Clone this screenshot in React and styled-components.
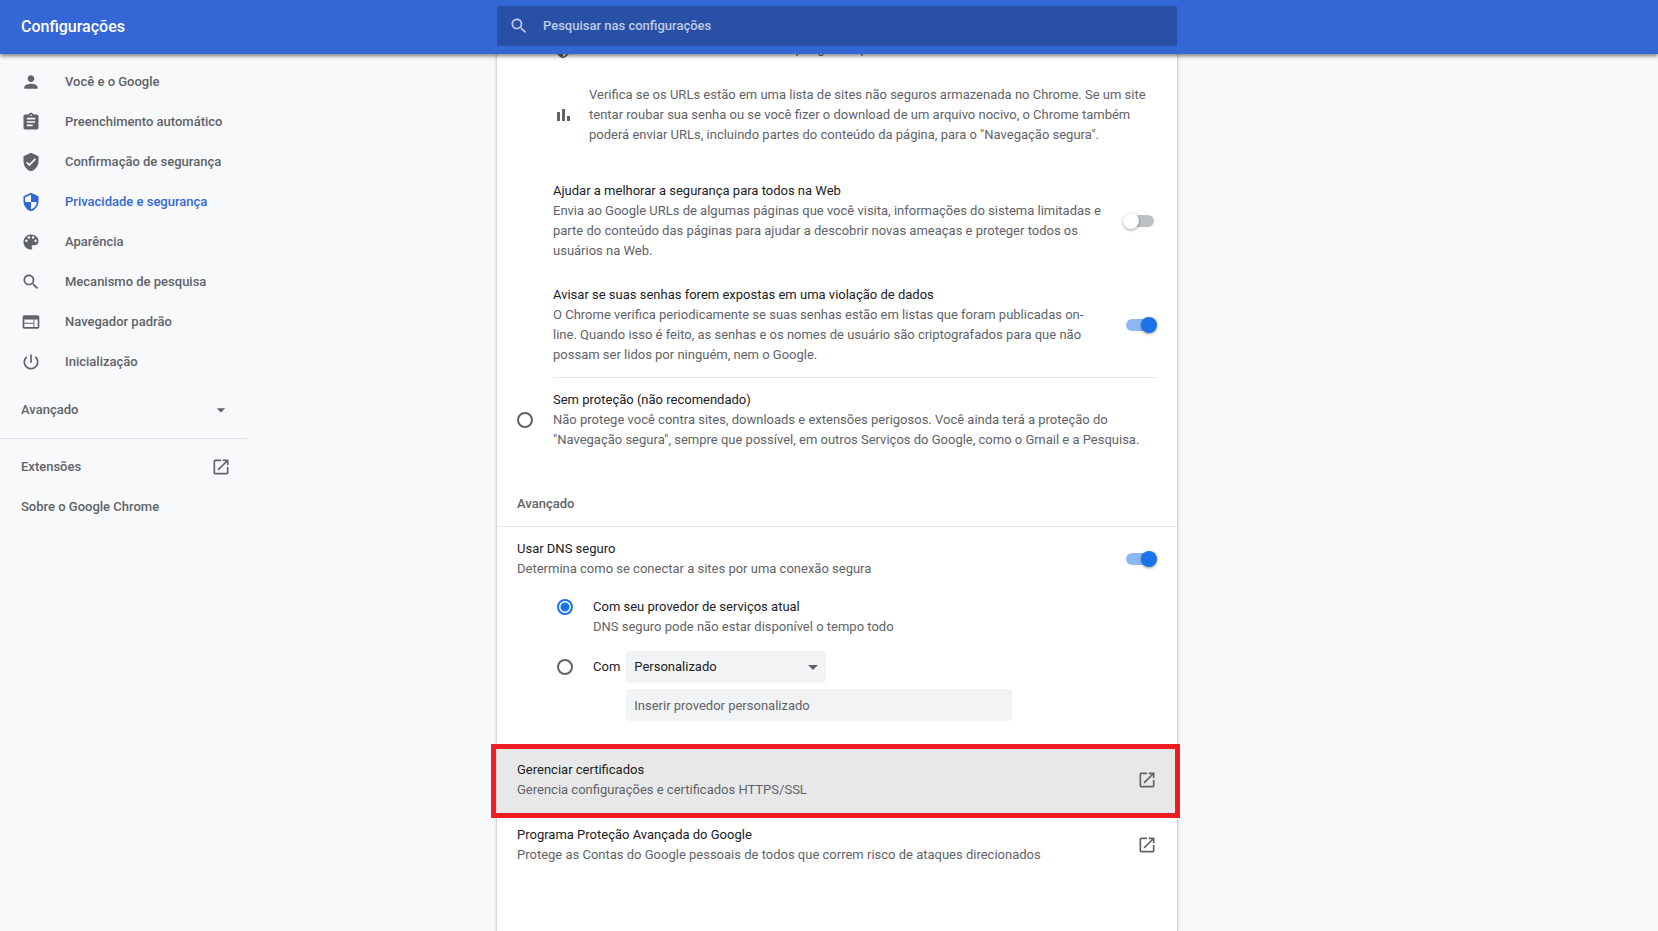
import React, { useId, useState } from 'react';
import styled, { createGlobalStyle, css } from 'styled-components';

const GlobalStyle = createGlobalStyle`
  * {
    box-sizing: border-box;
  }

  body {
    margin: 0;
    background: #f8f9fb;
    color: #202124;
    font-family: Roboto, 'Liberation Sans', sans-serif;
    font-size: 13px;
    line-height: 20px;
  }

  input,
  select,
  button {
    font: inherit;
  }
`;

const icons = {
  person:
    'M12 12c2.21 0 4-1.79 4-4s-1.79-4-4-4-4 1.79-4 4 1.79 4 4 4zm0 2c-2.67 0-8 1.34-8 4v2h16v-2c0-2.66-5.33-4-8-4z',
  assignment:
    'M19 3h-4.18C14.4 1.84 13.3 1 12 1c-1.3 0-2.4.84-2.82 2H5c-1.1 0-2 .9-2 2v14c0 1.1.9 2 2 2h14c1.1 0 2-.9 2-2V5c0-1.1-.9-2-2-2zm-7 0c.55 0 1 .45 1 1s-.45 1-1 1-1-.45-1-1 .45-1 1-1zm2 14H7v-2h7v2zm3-4H7v-2h10v2zm0-4H7V7h10v2z',
  verified:
    'M12 1L3 5v6c0 5.55 3.84 10.74 9 12 5.16-1.26 9-6.45 9-12V5l-9-4zm-2 16l-4-4 1.41-1.41L10 14.17l6.59-6.59L18 9l-8 8z',
  security:
    'M12 1L3 5v6c0 5.55 3.84 10.74 9 12 5.16-1.26 9-6.45 9-12V5l-9-4zm0 10.99h7c-.53 4.12-3.28 7.79-7 8.94V12H5V6.3l7-3.11v8.8z',
  palette:
    'M12 3c-4.97 0-9 4.03-9 9s4.03 9 9 9c.83 0 1.5-.67 1.5-1.5 0-.39-.15-.74-.39-1.01-.23-.26-.38-.61-.38-.99 0-.83.67-1.5 1.5-1.5H16c2.76 0 5-2.24 5-5 0-4.42-4.03-8-9-8zm-5.5 9c-.83 0-1.5-.67-1.5-1.5S5.67 9 6.5 9 8 9.67 8 10.5 7.33 12 6.5 12zm3-4C8.67 8 8 7.33 8 6.5S8.67 5 9.5 5s1.5.67 1.5 1.5S10.33 8 9.5 8zm5 0c-.83 0-1.5-.67-1.5-1.5S13.67 5 14.5 5s1.5.67 1.5 1.5S15.33 8 14.5 8zm3 4c-.83 0-1.5-.67-1.5-1.5S16.67 9 17.5 9s1.5.67 1.5 1.5-.67 1.5-1.5 1.5z',
  search:
    'M15.5 14h-.79l-.28-.27C15.41 12.59 16 11.11 16 9.5 16 5.91 13.09 3 9.5 3S3 5.91 3 9.5 5.91 16 9.5 16c1.61 0 3.09-.59 4.23-1.57l.27.28v.79l5 4.99L20.49 19l-4.99-5zm-6 0C7.01 14 5 11.99 5 9.5S7.01 5 9.5 5 14 7.01 14 9.5 11.99 14 9.5 14z',
  web: 'M20 4H4c-1.1 0-1.99.9-1.99 2L2 18c0 1.1.9 2 2 2h16c1.1 0 2-.9 2-2V6c0-1.1-.9-2-2-2zm-5 14H4v-4h11v4zm0-5H4V9h11v4zm5 5h-4V9h4v9z',
  power:
    'M13 3h-2v10h2V3zm4.83 2.17l-1.42 1.42C17.99 7.86 19 9.81 19 12c0 3.87-3.13 7-7 7s-7-3.13-7-7c0-2.19 1.01-4.14 2.58-5.42L6.17 5.17C4.23 6.82 3 9.26 3 12c0 4.97 4.03 9 9 9s9-4.03 9-9c0-2.74-1.23-5.18-3.17-6.83z',
  arrow: 'M7 10l5 5 5-5z',
  launch:
    'M19 19H5V5h7V3H5c-1.11 0-2 .9-2 2v14c0 1.1.89 2 2 2h14c1.1 0 2-.9 2-2v-7h-2v7zM14 3v2h3.59l-9.83 9.83 1.41 1.41L19 6.41V10h2V3h-7z',
  chart: 'M4.8 8.4h3.6v10.8H4.8zm6-3.6h3.6v14.4h-3.6zm6 8.4h3.6v6h-3.6z',
};

const StyledIcon = styled.svg`
  display: block;
  flex: none;
  width: 20px;
  height: 20px;
  fill: currentColor;
`;

const Icon = ({ name }) => (
  <StyledIcon viewBox="0 0 24 24" aria-hidden="true">
    <path d={icons[name]} />
  </StyledIcon>
);

const columns = css`
  display: grid;
  grid-template-columns: 1fr minmax(0, 680px) 1fr;
  padding-left: 16px;
`;

const Page = styled.div`
  height: 100vh;
  overflow: hidden;
  display: flex;
  flex-direction: column;
`;

const Toolbar = styled.header`
  ${columns}
  position: relative;
  z-index: 1;
  flex: none;
  align-items: center;
  padding-top: 6px;
  padding-bottom: 8px;
  background: #3367d6;
  color: #fff;
  box-shadow: 0 2px 4px rgba(0, 0, 0, 0.5);
`;

const Title = styled.h1`
  margin: 0;
  padding: 2px 0 0 5px;
  font-size: 16px;
  font-weight: 500;
`;

const SearchBox = styled.label`
  display: flex;
  align-items: center;
  gap: 14px;
  height: 40px;
  padding: 0 12px;
  border-radius: 2px;
  background: #2850a7;
  color: #bfcbe5;
`;

const SearchInput = styled.input`
  flex: 1;
  min-width: 0;
  padding: 0;
  border: 0;
  outline: 0;
  background: transparent;
  color: #fff;
  font-weight: 500;

  &::placeholder {
    color: #bfcbe5;
    opacity: 1;
  }
`;

const Content = styled.div`
  ${columns}
  flex: 1;
  min-height: 0;
`;

const Sidebar = styled.nav`
  width: 247px;
  margin-left: -16px;
  padding-top: 8px;
  color: #5f6368;
  font-weight: 500;
`;

const navRow = css`
  display: flex;
  align-items: center;
  width: 100%;
  height: 40px;
  padding: 0 16px 0 21px;
  color: inherit;
`;

const NavLink = styled.a`
  ${navRow}
  gap: 24px;
  justify-content: ${props => (props.$spread ? 'space-between' : 'flex-start')};
  color: ${props => (props.$active ? '#3367d6' : 'inherit')};
  text-decoration: none;
`;

const AdvancedButton = styled.button`
  ${navRow}
  justify-content: space-between;
  margin: 8px 0;
  border: 0;
  background: none;
  font-weight: 500;
  cursor: pointer;
`;

const NavDivider = styled.hr`
  margin: 0 0 8px;
  border: 0;
  border-top: 1px solid #e0e2e5;
`;

// the card is scrolled, its first line sits half under the toolbar
const Card = styled.main`
  min-height: 100%;
  margin-top: -15px;
  background: #fff;
  box-shadow: 0 1px 2px rgba(60, 64, 67, 0.3), 0 1px 3px 1px rgba(60, 64, 67, 0.15);
`;

const Bullets = styled.ul`
  display: grid;
  gap: 26px;
  margin: 0;
  padding: 0 20px 36px 56px;
  list-style: none;
  color: #5f6368;
`;

const Bullet = styled.li`
  display: flex;
  align-items: center;
  gap: 16px;
`;

const SubOptions = styled.div`
  display: grid;
  gap: 24px;
  margin: 0 20px 0 56px;
  padding-bottom: 12px;
  border-bottom: 1px solid #e8eaed;
`;

const Setting = styled.div`
  display: flex;
  align-items: center;
  justify-content: space-between;
  gap: 20px;
`;

const SettingLabel = styled.label`
  display: block;
  min-width: 0;
`;

const Secondary = styled.span`
  display: block;
  color: #5f6368;
`;

const ToggleInput = styled.input`
  appearance: none;
  position: relative;
  flex: none;
  width: 34px;
  height: 16px;
  margin: 0;
  cursor: pointer;

  &::before {
    content: '';
    position: absolute;
    inset: 2px 3px;
    border-radius: 6px;
    background: #bdc1c6;
  }

  &::after {
    content: '';
    position: absolute;
    top: 0;
    left: 0;
    width: 16px;
    height: 16px;
    border-radius: 50%;
    background: #fff;
    box-shadow: 0 1px 3px rgba(0, 0, 0, 0.4);
  }

  &:checked::before {
    background: #8cb9f4;
  }

  &:checked::after {
    left: 18px;
    background: #1a73e8;
  }
`;

const RadioInput = styled.input`
  appearance: none;
  flex: none;
  width: 16px;
  height: 16px;
  margin: 0;
  border: 2px solid #5f6368;
  border-radius: 50%;
  cursor: pointer;

  &:checked {
    border-color: #1a73e8;
    background: radial-gradient(circle, #1a73e8 4px, transparent 5px);
  }
`;

const RadioRow = styled.div`
  display: flex;
  align-items: ${props => (props.$inset ? 'flex-start' : 'center')};
  gap: 20px;

  ${RadioInput} {
    margin-top: ${props => props.$inset || '0'};
  }
`;

const NoProtection = styled.div`
  padding: 12px 20px 44px;
`;

const SectionTitle = styled.h2`
  margin: 0;
  padding: 0 20px 12px;
  border-bottom: 1px solid #e8eaed;
  color: #5f6368;
  font-size: 13px;
  font-weight: 500;
`;

const DnsSection = styled.section`
  padding: 12px 20px 27px;
`;

const DnsOptions = styled.div`
  display: grid;
  gap: 14px;
  padding: 18px 0 0 40px;
`;

const Provider = styled.div`
  display: grid;
  grid-template-columns: max-content minmax(0, 386px);
  align-items: center;
  gap: 6px;
  flex: 1;
`;

const SelectWrap = styled.div`
  position: relative;
  width: 200px;
`;

const field = css`
  width: 100%;
  height: 32px;
  padding: 0 8px;
  border: 0;
  border-radius: 4px;
  background: #f1f3f4;
`;

const Select = styled.select`
  ${field}
  display: block;
  appearance: none;
  color: #202124;
`;

const SelectArrow = styled.svg`
  position: absolute;
  top: 14px;
  right: 8px;
  width: 10px;
  height: 5px;
  fill: #5f6368;
  pointer-events: none;
`;

const ProviderInput = styled.input`
  ${field}
  grid-column: 2;

  &::placeholder {
    color: #5f6368;
    opacity: 1;
  }
`;

const LinkRow = styled.a`
  display: flex;
  position: relative;
  align-items: center;
  justify-content: space-between;
  gap: 20px;
  padding: 12px 20px 13px;
  background: ${props => (props.$marked ? '#e8e8e8' : 'transparent')};
  color: #202124;
  text-decoration: none;

  ${StyledIcon} {
    color: #5f6368;
  }

  ${props =>
    props.$marked &&
    css`
      &::after {
        content: '';
        position: absolute;
        inset: -4px -3px -5px -6px;
        border: 5px solid #ee1c24;
      }
    `}
`;

const navItems = [
  { icon: 'person', text: 'Você e o Google' },
  { icon: 'assignment', text: 'Preenchimento automático' },
  { icon: 'verified', text: 'Confirmação de segurança' },
  { icon: 'security', text: 'Privacidade e segurança', active: true },
  { icon: 'palette', text: 'Aparência' },
  { icon: 'search', text: 'Mecanismo de pesquisa' },
  { icon: 'web', text: 'Navegador padrão' },
  { icon: 'power', text: 'Inicialização' },
];

const ToggleRow = ({ title, text, defaultChecked }) => {
  const id = useId();
  return (
    <Setting>
      <SettingLabel htmlFor={id}>
        {title}
        <Secondary>{text}</Secondary>
      </SettingLabel>
      <ToggleInput type="checkbox" role="switch" id={id} defaultChecked={defaultChecked} />
    </Setting>
  );
};

const ExternalRow = ({ title, text, marked }) => (
  <LinkRow href="#" $marked={marked}>
    <span>
      {title}
      <Secondary>{text}</Secondary>
    </span>
    <Icon name="launch" />
  </LinkRow>
);

const DnsProvider = () => {
  const [mode, setMode] = useState('current');
  return (
    <DnsOptions>
      <RadioRow $inset="2px">
        <RadioInput
          type="radio"
          name="dns"
          id="dns-current"
          checked={mode === 'current'}
          onChange={() => setMode('current')}
        />
        <SettingLabel htmlFor="dns-current">
          Com seu provedor de serviços atual
          <Secondary>DNS seguro pode não estar disponível o tempo todo</Secondary>
        </SettingLabel>
      </RadioRow>
      <RadioRow $inset="8px">
        <RadioInput
          type="radio"
          name="dns"
          id="dns-custom"
          checked={mode === 'custom'}
          onChange={() => setMode('custom')}
        />
        <Provider>
          <SettingLabel htmlFor="dns-custom">Com</SettingLabel>
          <SelectWrap>
            <Select aria-label="Provedor de DNS">
              <option>Personalizado</option>
            </Select>
            <SelectArrow viewBox="0 0 10 5" aria-hidden="true">
              <path d="M0 0l5 5 5-5z" />
            </SelectArrow>
          </SelectWrap>
          <ProviderInput
            type="text"
            aria-label="Inserir provedor personalizado"
            placeholder="Inserir provedor personalizado"
          />
        </Provider>
      </RadioRow>
    </DnsOptions>
  );
};

const App = () => {
  return (
    <>
      <GlobalStyle />
      <Page>
        <Toolbar>
          <Title>Configurações</Title>
          <SearchBox>
            <Icon name="search" />
            <SearchInput
              type="search"
              aria-label="Pesquisar nas configurações"
              placeholder="Pesquisar nas configurações"
            />
          </SearchBox>
        </Toolbar>
        <Content>
          <Sidebar>
            {navItems.map(item => (
              <NavLink key={item.icon} href="#" $active={item.active}>
                <Icon name={item.icon} />
                {item.text}
              </NavLink>
            ))}
            <AdvancedButton type="button">
              Avançado
              <Icon name="arrow" />
            </AdvancedButton>
            <NavDivider />
            <NavLink href="#" $spread>
              Extensões
              <Icon name="launch" />
            </NavLink>
            <NavLink href="#">Sobre o Google Chrome</NavLink>
          </Sidebar>
          <Card>
            <Bullets>
              <Bullet>
                <Icon name="security" />
                Detecta e avisa você sobre eventos perigosos quando eles acontecem
              </Bullet>
              <Bullet>
                <Icon name="chart" />
                Verifica se os URLs estão em uma lista de sites não seguros armazenada no Chrome. Se
                um site tentar roubar sua senha ou se você fizer o download de um arquivo nocivo, o
                Chrome também poderá enviar URLs, incluindo partes do conteúdo da página, para o
                "Navegação segura".
              </Bullet>
            </Bullets>
            <SubOptions>
              <ToggleRow
                title="Ajudar a melhorar a segurança para todos na Web"
                text="Envia ao Google URLs de algumas páginas que você visita, informações do sistema limitadas e parte do conteúdo das páginas para ajudar a descobrir novas ameaças e proteger todos os usuários na Web."
              />
              <ToggleRow
                title="Avisar se suas senhas forem expostas em uma violação de dados"
                text="O Chrome verifica periodicamente se suas senhas estão em listas que foram publicadas on-line. Quando isso é feito, as senhas e os nomes de usuário são criptografados para que não possam ser lidos por ninguém, nem o Google."
                defaultChecked
              />
            </SubOptions>
            <NoProtection>
              <RadioRow>
                <RadioInput type="radio" name="protection" id="no-protection" />
                <SettingLabel htmlFor="no-protection">
                  Sem proteção (não recomendado)
                  <Secondary>
                    Não protege você contra sites, downloads e extensões perigosos. Você ainda terá a
                    proteção do "Navegação segura", sempre que possível, em outros Serviços do
                    Google, como o Gmail e a Pesquisa.
                  </Secondary>
                </SettingLabel>
              </RadioRow>
            </NoProtection>
            <SectionTitle>Avançado</SectionTitle>
            <DnsSection>
              <ToggleRow
                title="Usar DNS seguro"
                text="Determina como se conectar a sites por uma conexão segura"
                defaultChecked
              />
              <DnsProvider />
            </DnsSection>
            <ExternalRow
              title="Gerenciar certificados"
              text="Gerencia configurações e certificados HTTPS/SSL"
              marked
            />
            <ExternalRow
              title="Programa Proteção Avançada do Google"
              text="Protege as Contas do Google pessoais de todos que correm risco de ataques direcionados"
            />
          </Card>
        </Content>
      </Page>
    </>
  );
};

export default App;
